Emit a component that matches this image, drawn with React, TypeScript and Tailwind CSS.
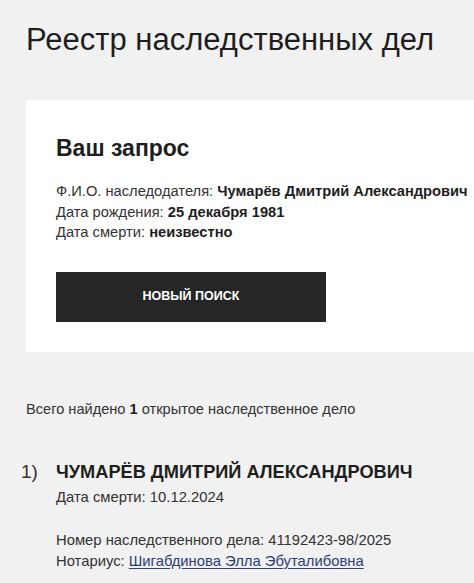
import React from 'react';

export default function App() {
  return (
    <div className="min-h-[583px] bg-[#f1f1f1] text-[#222] overflow-hidden" style={{ fontFamily: '"Liberation Sans", Arial, sans-serif' }}>
      <h1 className="pl-[26px] pt-[22px] text-[31px] leading-[36px] font-normal text-[#1e1e1e]">Реестр наследственных дел</h1>

      {/* Request card */}
      <div className="ml-[26px] mt-[42px] bg-white pl-[30px] pt-[34px] pb-[30px]">
        <h2 className="text-[23px] leading-[28px] font-bold text-[#1e1e1e]">Ваш запрос</h2>
        <div className="mt-[19px] text-[14.7px] leading-[20.5px] text-[#333]">
          <p className="whitespace-nowrap">Ф.И.О. наследодателя: <b className="text-[#1e1e1e]">Чумарёв Дмитрий Александрович</b></p>
          <p>Дата рождения: <b className="text-[#1e1e1e]">25 декабря 1981</b></p>
          <p>Дата смерти: <b className="text-[#1e1e1e]">неизвестно</b></p>
        </div>
        <button className="mt-[29px] w-[270px] h-[50px] bg-[#262626] text-white text-[12.5px] font-bold uppercase">
          Новый поиск
        </button>
      </div>

      <p className="pl-[26px] mt-[47px] text-[14.6px] leading-[20px] text-[#333]">
        Всего найдено <b className="text-[#1e1e1e]">1</b> открытое наследственное дело
      </p>

      {/* Result */}
      <div className="mt-[41px] flex">
        <span className="w-[56px] pl-[21px] text-[19px] leading-[24px] text-[#333]">1)</span>
        <div>
          <h3 className="text-[18.2px] leading-[24px] font-bold uppercase text-[#1e1e1e]">Чумарёв Дмитрий Александрович</h3>
          <p className="mt-[3px] text-[14.8px] leading-[20px] text-[#333]">Дата смерти: 10.12.2024</p>
          <div className="mt-[23px] text-[14.8px] leading-[21px] text-[#333]">
            <p>Номер наследственного дела: 41192423-98/2025</p>
            <p>
              Нотариус: <a href="#" className="text-[#2b3f74] underline underline-offset-2">Шигабдинова Элла Эбуталибовна</a>
            </p>
          </div>
        </div>
      </div>
    </div>
  );
}
